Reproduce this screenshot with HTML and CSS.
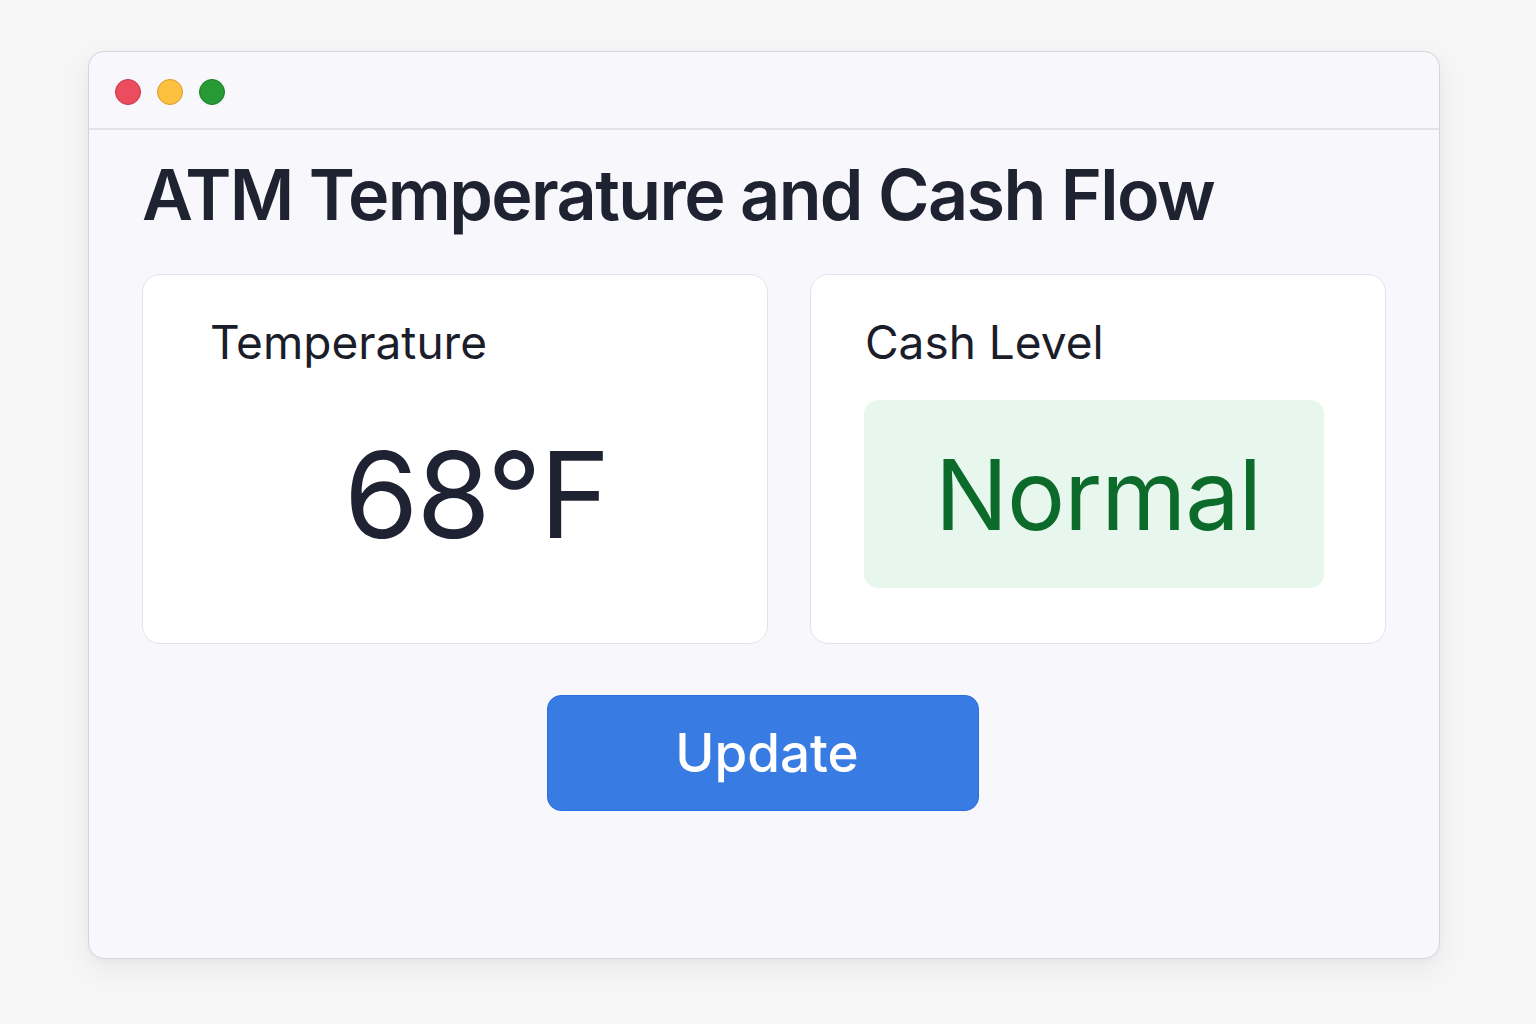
FILE: index.html
```html
<!DOCTYPE html>
<html lang="en">
<head>
<meta charset="utf-8">
<title>ATM Temperature and Cash Flow</title>
<link rel="stylesheet" href="styles.css">
</head>
<body>
<div class="window">
  <div class="titlebar">
    <span class="dot dot-red"></span>
    <span class="dot dot-yellow"></span>
    <span class="dot dot-green"></span>
  </div>
  <main class="content">
    <h1 class="title">ATM Temperature and Cash Flow</h1>
    <div class="cards">
      <section class="card card-temp">
        <h2 class="card-label">Temperature</h2>
        <div class="temp-value">68°F</div>
      </section>
      <section class="card card-cash">
        <h2 class="card-label">Cash Level</h2>
        <div class="status-box">Normal</div>
      </section>
    </div>
    <div class="actions">
      <button class="btn-update" type="button">Update</button>
    </div>
  </main>
</div>
</body>
</html>
```
FILE: styles.css
```css
* { box-sizing: border-box; }
html, body { margin: 0; }
body {
  background: #f6f6f7;
  font-family: Inter, "Noto Sans", "Liberation Sans", sans-serif;
  padding: 51px 0 0 88px;
  height: 1024px;
}
.window {
  width: 1352px;
  height: 908px;
  background: #f8f8fc;
  border: 1px solid #d4d4dc;
  border-radius: 16px;
  box-shadow: 0 10px 30px rgba(0,0,0,0.06), 0 2px 6px rgba(0,0,0,0.03);
  overflow: hidden;
}
.titlebar {
  height: 78px;
  border-bottom: 2px solid #e3e3ea;
  display: flex;
  align-items: center;
  gap: 16px;
  padding-left: 26px;
  padding-top: 4px;
}
.dot {
  width: 26px;
  height: 26px;
  border-radius: 50%;
  display: block;
}
.dot-red { background: #ec4d5e; border: 1px solid #c83447; }
.dot-yellow { background: #fdbf40; border: 1px solid #d79b2a; }
.dot-green { background: #279a36; border: 1px solid #157a25; }
.content {
  padding: 29px 54px 0 53px;
}
.title {
  margin: 0;
  font-size: 70px;
  line-height: 71px;
  font-weight: 600;
  color: #1f2230;
  letter-spacing: -1.6px;
}
.cards {
  display: grid;
  grid-template-columns: 626px 576px;
  gap: 42px;
  margin-top: 44px;
}
.card {
  height: 370px;
  background: #ffffff;
  border: 1px solid #e2e2ea;
  border-radius: 18px;
}
.card-label {
  margin: 0;
  font-size: 46px;
  line-height: 46px;
  font-weight: 400;
  color: #1b1e2a;
}
.card-temp { padding: 44px 0 0 67px; }
.temp-value {
  margin-top: 70px;
  padding-left: 134px;
  font-size: 120px;
  line-height: 120px;
  font-weight: 400;
  color: #1e2232;
  letter-spacing: -2px;
}
.card-cash { padding: 44px 61px 0 53px; }
.card-cash .card-label { padding-left: 1px; }
.status-box {
  margin-top: 35px;
  height: 188px;
  background: #e8f7ed;
  border-radius: 14px;
  display: flex;
  align-items: center;
  justify-content: center;
  font-size: 97px;
  font-weight: 400;
  color: #0c6b2b;
  letter-spacing: -1px;
  padding-left: 8px;
}
.actions {
  display: flex;
  justify-content: center;
  margin-top: 51px;
}
.btn-update {
  width: 432px;
  height: 116px;
  background: #387be3;
  border: 1px solid #2a6ee0;
  border-radius: 14px;
  color: #ffffff;
  font-family: Inter, "Noto Sans", "Liberation Sans", sans-serif;
  font-size: 53px;
  font-weight: 500;
  padding: 0 0 0 8px;
  margin-left: -1px;
}
```
